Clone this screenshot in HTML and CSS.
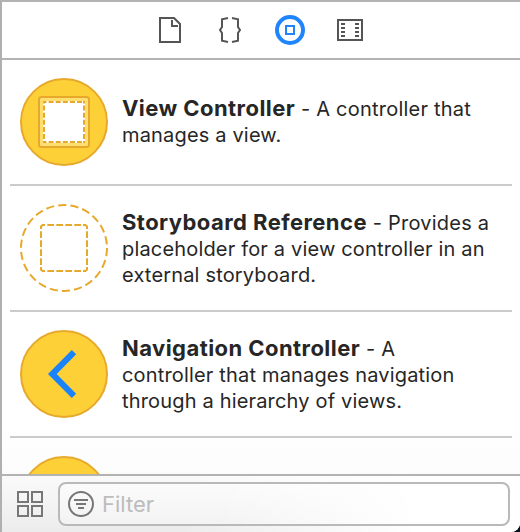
FILE: index.html
```html
<!DOCTYPE html>
<html lang="en">
<head>
<meta charset="utf-8">
<title>Object Library</title>
<link rel="stylesheet" href="styles.css">
</head>
<body>
<main class="panel">
  <nav class="tabs">
    <svg width="26" height="30" viewBox="0 0 26 30"><g fill="none" stroke="#555" stroke-width="2"><path d="M3 3H17L23 9V27H3Z"/><path d="M15 5V11H21"/></g></svg>
    <svg width="26" height="30" viewBox="0 0 26 30"><g fill="none" stroke="#555" stroke-width="2"><path d="M11 3L5 4.3V12L3 15L5 18V25.7L11 27"/><path d="M15 3L21 4.3V12L23 15L21 18V25.7L15 27"/></g></svg>
    <svg width="30" height="30" viewBox="0 0 30 30"><g fill="none" stroke="#2084fc"><circle cx="15" cy="15" r="13" stroke-width="4"/><path d="M11 11H19V19H11Z" stroke-width="2"/></g></svg>
    <svg width="26" height="30" viewBox="0 0 26 30"><g fill="none" stroke="#555" stroke-width="2"><path d="M1 5H25V25H1Z"/><path d="M4 9H8M4 13H8M4 17H8M4 21H8M18 9H22M18 13H22M18 17H22M18 21H22"/></g></svg>
  </nav>
  <section class="list">
    <article class="row">
      <svg class="icon" viewBox="0 0 88 88">
        <circle cx="44" cy="44" r="43" fill="#fdd037" stroke="#e7a92c" stroke-width="2"/>
        <rect x="19" y="19" width="50" height="50" rx="2.5" fill="#ffde70" stroke="#e7a92c" stroke-width="2"/>
        <path d="M23 23H65V65H23Z" fill="#fff"/>
        <path d="M23 24H65M23 64H65" fill="none" stroke="#e7a92c" stroke-width="2" stroke-dasharray="5 2.1" stroke-dashoffset="1.5"/>
        <path d="M24 23V65M64 23V65" fill="none" stroke="#e7a92c" stroke-width="2" stroke-dasharray="5 2.1" stroke-dashoffset="2.5"/>
      </svg>
      <p class="copy first"><span class="line lead"><b>View Controller</b> - A controller that</span><span class="line">manages a view.</span></p>
    </article>
    <article class="row">
      <svg class="icon" viewBox="0 0 88 88">
        <g fill="none" stroke="#e7a92c" stroke-width="2">
          <circle cx="44" cy="44" r="43" stroke-dasharray="8.2 4.08"/>
          <path d="M27.3 21H61M27.3 67H61M21 27.3V61M67 27.3V61" stroke-dasharray="6.7 2.3"/>
          <path d="M25 21H22.5L21 22.5V25M63 21H65.5L67 22.5V25M21 63V65.5L22.5 67H25M67 63V65.5L65.5 67H63"/>
        </g>
      </svg>
      <p class="copy"><span class="line lead"><b>Storyboard Reference</b> - Provides a</span><span class="line">placeholder for a view controller in an</span><span class="line">external storyboard.</span></p>
    </article>
    <article class="row">
      <svg class="icon" viewBox="0 0 88 88"><circle cx="44" cy="44" r="43" fill="#fdd037" stroke="#e7a92c" stroke-width="2"/><path d="M54 22.2L32.3 44L54 65.8" fill="none" stroke="#1a82fb" stroke-width="6.1"/></svg>
      <p class="copy"><span class="line lead"><b>Navigation Controller</b> - A</span><span class="line">controller that manages navigation</span><span class="line">through a hierarchy of views.</span></p>
    </article>
    <article class="row">
      <svg class="icon" viewBox="0 0 88 88"><circle cx="44" cy="44" r="43" fill="#fdd037" stroke="#e7a92c" stroke-width="2"/></svg>
    </article>
  </section>
  <footer class="bar">
    <svg width="26" height="26" viewBox="0 0 26 26"><path d="M1 1H11V11H1ZM15 1H25V11H15ZM1 15H11V25H1ZM15 15H25V25H15Z" fill="none" stroke="#777" stroke-width="2"/></svg>
    <div class="field">
      <svg width="26" height="26" viewBox="0 0 26 26"><g fill="none" stroke="#777" stroke-width="2"><circle cx="13" cy="13" r="12"/><path d="M6 9H20M8 13H18M10 17H16"/></g></svg>
      <span class="placeholder">Filter</span>
    </div>
  </footer>
</main>
</body>
</html>
```
FILE: styles.css
```css
* { box-sizing: border-box; }
body { margin: 0; background: #0b1122; overflow: hidden; }
.panel {
  width: 520px; height: 532px;
  display: flex; flex-direction: column;
  border-top: 2px solid #b3b3b3; border-left: 2px solid #b0b0b0;
  border-bottom-right-radius: 9px;
  background: #fff; overflow: hidden;
  font-family: Inter, "Liberation Sans", sans-serif; color: #262626;
}
svg { display: block; flex: none; }
.tabs {
  height: 58px; flex: none;
  display: flex; align-items: center; gap: 34px;
  padding-left: 155px; border-bottom: 2px solid #b3b3b3;
}
.tabs svg:nth-child(3) { margin-left: -2px; }
.tabs svg:nth-child(4) { margin-left: -2px; }
.list {
  height: 414px; flex: none; overflow: hidden; padding: 0 8px;
  background: linear-gradient(#fff 88%, #fcfcfc);
}
.row {
  height: 126px; padding: 18px 0 0 10px;
  display: flex; gap: 14px; border-bottom: 2px solid #cbcbcb;
}
.icon { width: 88px; height: 88px; }
.copy { margin: 6px 0 0; font-size: 20px; }
.copy.first { margin-top: 18px; }
.line { display: block; height: 26px; line-height: 26px; white-space: nowrap; letter-spacing: .17px; }
.line.lead { letter-spacing: .22px; }
.line b { font-size: 22px; font-weight: 700; line-height: 24px; letter-spacing: .44px; }
.bar {
  flex: 1; display: flex; align-items: center; gap: 15px;
  padding: 0 10px 0 15px; border-top: 2px solid #b3b3b3;
  background: linear-gradient(90deg, transparent 35%, #fff 80%), linear-gradient(#fafafa, #ececec);
}
.field {
  flex: 1; height: 44px; display: flex; align-items: center; gap: 8px;
  padding-left: 8px; border: 2px solid #b9b9b9; border-radius: 8px;
  background: linear-gradient(90deg, transparent 35%, #fff 80%), linear-gradient(#fbfbfb, #f3f3f3);
}
.placeholder { font-size: 22px; line-height: 26px; color: #bcbcbc; }
```
